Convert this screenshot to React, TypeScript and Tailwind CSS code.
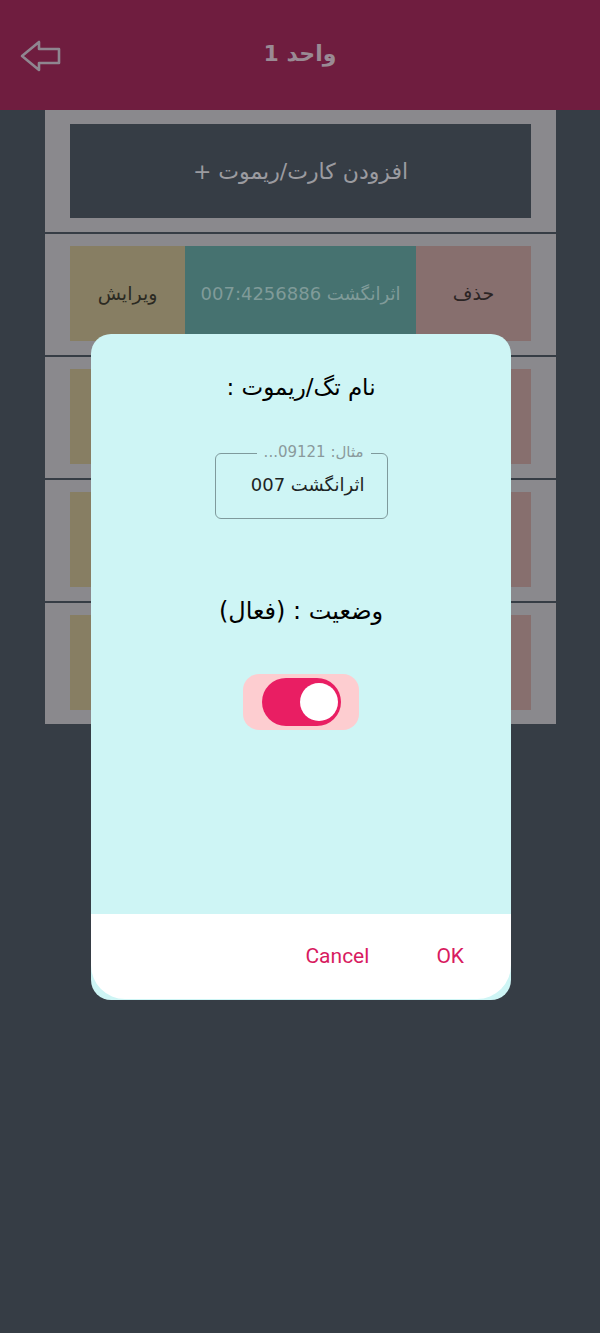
import React from "react";

const AR = { fontFamily: '"DejaVu Sans", "Noto Sans", sans-serif' };

function ItemRow() {
  return (
    <div className="h-[121px] px-[25px] py-[12px] flex bg-[#8a898d]">
      <div className="w-[115px] h-[95px] bg-[#877e63] flex items-center justify-center text-[19px] text-[#2b2a22]" style={AR}>
        ویرایش
      </div>
      <div className="flex-1 h-[95px] bg-[#467270] flex items-center justify-center text-[18px] text-[#809b99]" style={AR} dir="rtl">
        اثرانگشت 007:4256886
      </div>
      <div className="w-[115px] h-[95px] bg-[#876f6e] flex items-center justify-center text-[19px] text-[#2b2424]" style={AR}>
        حذف
      </div>
    </div>
  );
}

export default function App() {
  return (
    <div className="relative w-[600px] h-[1333px] bg-[#363d45] overflow-hidden">
      {/* Header */}
      <div className="h-[110px] bg-[#6f1d3f] flex items-center relative">
        <svg className="absolute left-[19px] top-[39px]" width="44" height="34" viewBox="0 0 44 34">
          <path
            d="M3 17 L20 3 L20 10 L40 10 L40 24 L20 24 L20 31 Z"
            fill="none"
            stroke="#8f8690"
            strokeWidth="2.6"
            strokeLinejoin="round"
          />
        </svg>
        <div className="w-full text-center text-[22px] font-bold text-[#9a8a94] -mt-[4px]" style={AR}>
          واحد 1
        </div>
      </div>

      {/* List */}
      <div className="mx-[45px] w-[511px] flex flex-col gap-[2px] bg-[#363d45]">
        <div className="h-[122px] px-[25px] pt-[14px] pb-[14px] bg-[#8a898d]">
          <div className="h-[94px] bg-[#363d45] flex items-center justify-center text-[22px] text-[#9b9ba0]" style={AR} dir="rtl">
            افزودن کارت/ریموت +
          </div>
        </div>
        <ItemRow />
        <ItemRow />
        <ItemRow />
        <ItemRow />
      </div>

      {/* Dialog */}
      <div className="absolute left-[91px] top-[334px] w-[420px] h-[666px] bg-[#cef5f5] rounded-[20px] overflow-hidden flex flex-col">
        <div className="pt-[37px] text-center text-[23px] leading-[32px] text-black" style={AR} dir="rtl">
          نام تگ/ریموت :
        </div>
        <div className="mt-[50px] mx-auto relative w-[173px] h-[66px] border-[1.5px] border-[#7f9a9c] rounded-[6px]">
          <div className="absolute right-[16px] -top-[11px] px-[7px] bg-[#cef5f5] text-[15px] leading-[18px] text-[#8a9a9c]" style={AR} dir="rtl">
            مثال: 09121...
          </div>
          <div className="absolute right-[22px] top-[18px] text-[18px] leading-[26px] text-[#1d2424]" style={AR} dir="rtl">
            اثرانگشت 007
          </div>
        </div>
        <div className="mt-[76px] text-center text-[24px] leading-[32px] text-black" style={AR} dir="rtl">
          وضعیت : (فعال)
        </div>
        <div className="mt-[47px] mx-auto w-[116px] h-[56px] rounded-[16px] bg-[#fdcdd0] flex items-center justify-center">
          <div className="w-[79px] h-[48px] rounded-full bg-[#e91e63] flex items-center justify-end pr-[3px]">
            <div className="w-[38px] h-[38px] rounded-full bg-white" />
          </div>
        </div>
        <div className="flex-1" />
        <div className="h-[85px] bg-white rounded-b-[34px] flex items-center justify-end pr-[47px] gap-[67px]">
          <span className="text-[21px] text-[#d81b60]" style={{ fontFamily: "Roboto, sans-serif" }}>Cancel</span>
          <span className="text-[21px] text-[#d81b60]" style={{ fontFamily: "Roboto, sans-serif" }}>OK</span>
        </div>
        <div className="h-[1px]" />
      </div>
    </div>
  );
}
